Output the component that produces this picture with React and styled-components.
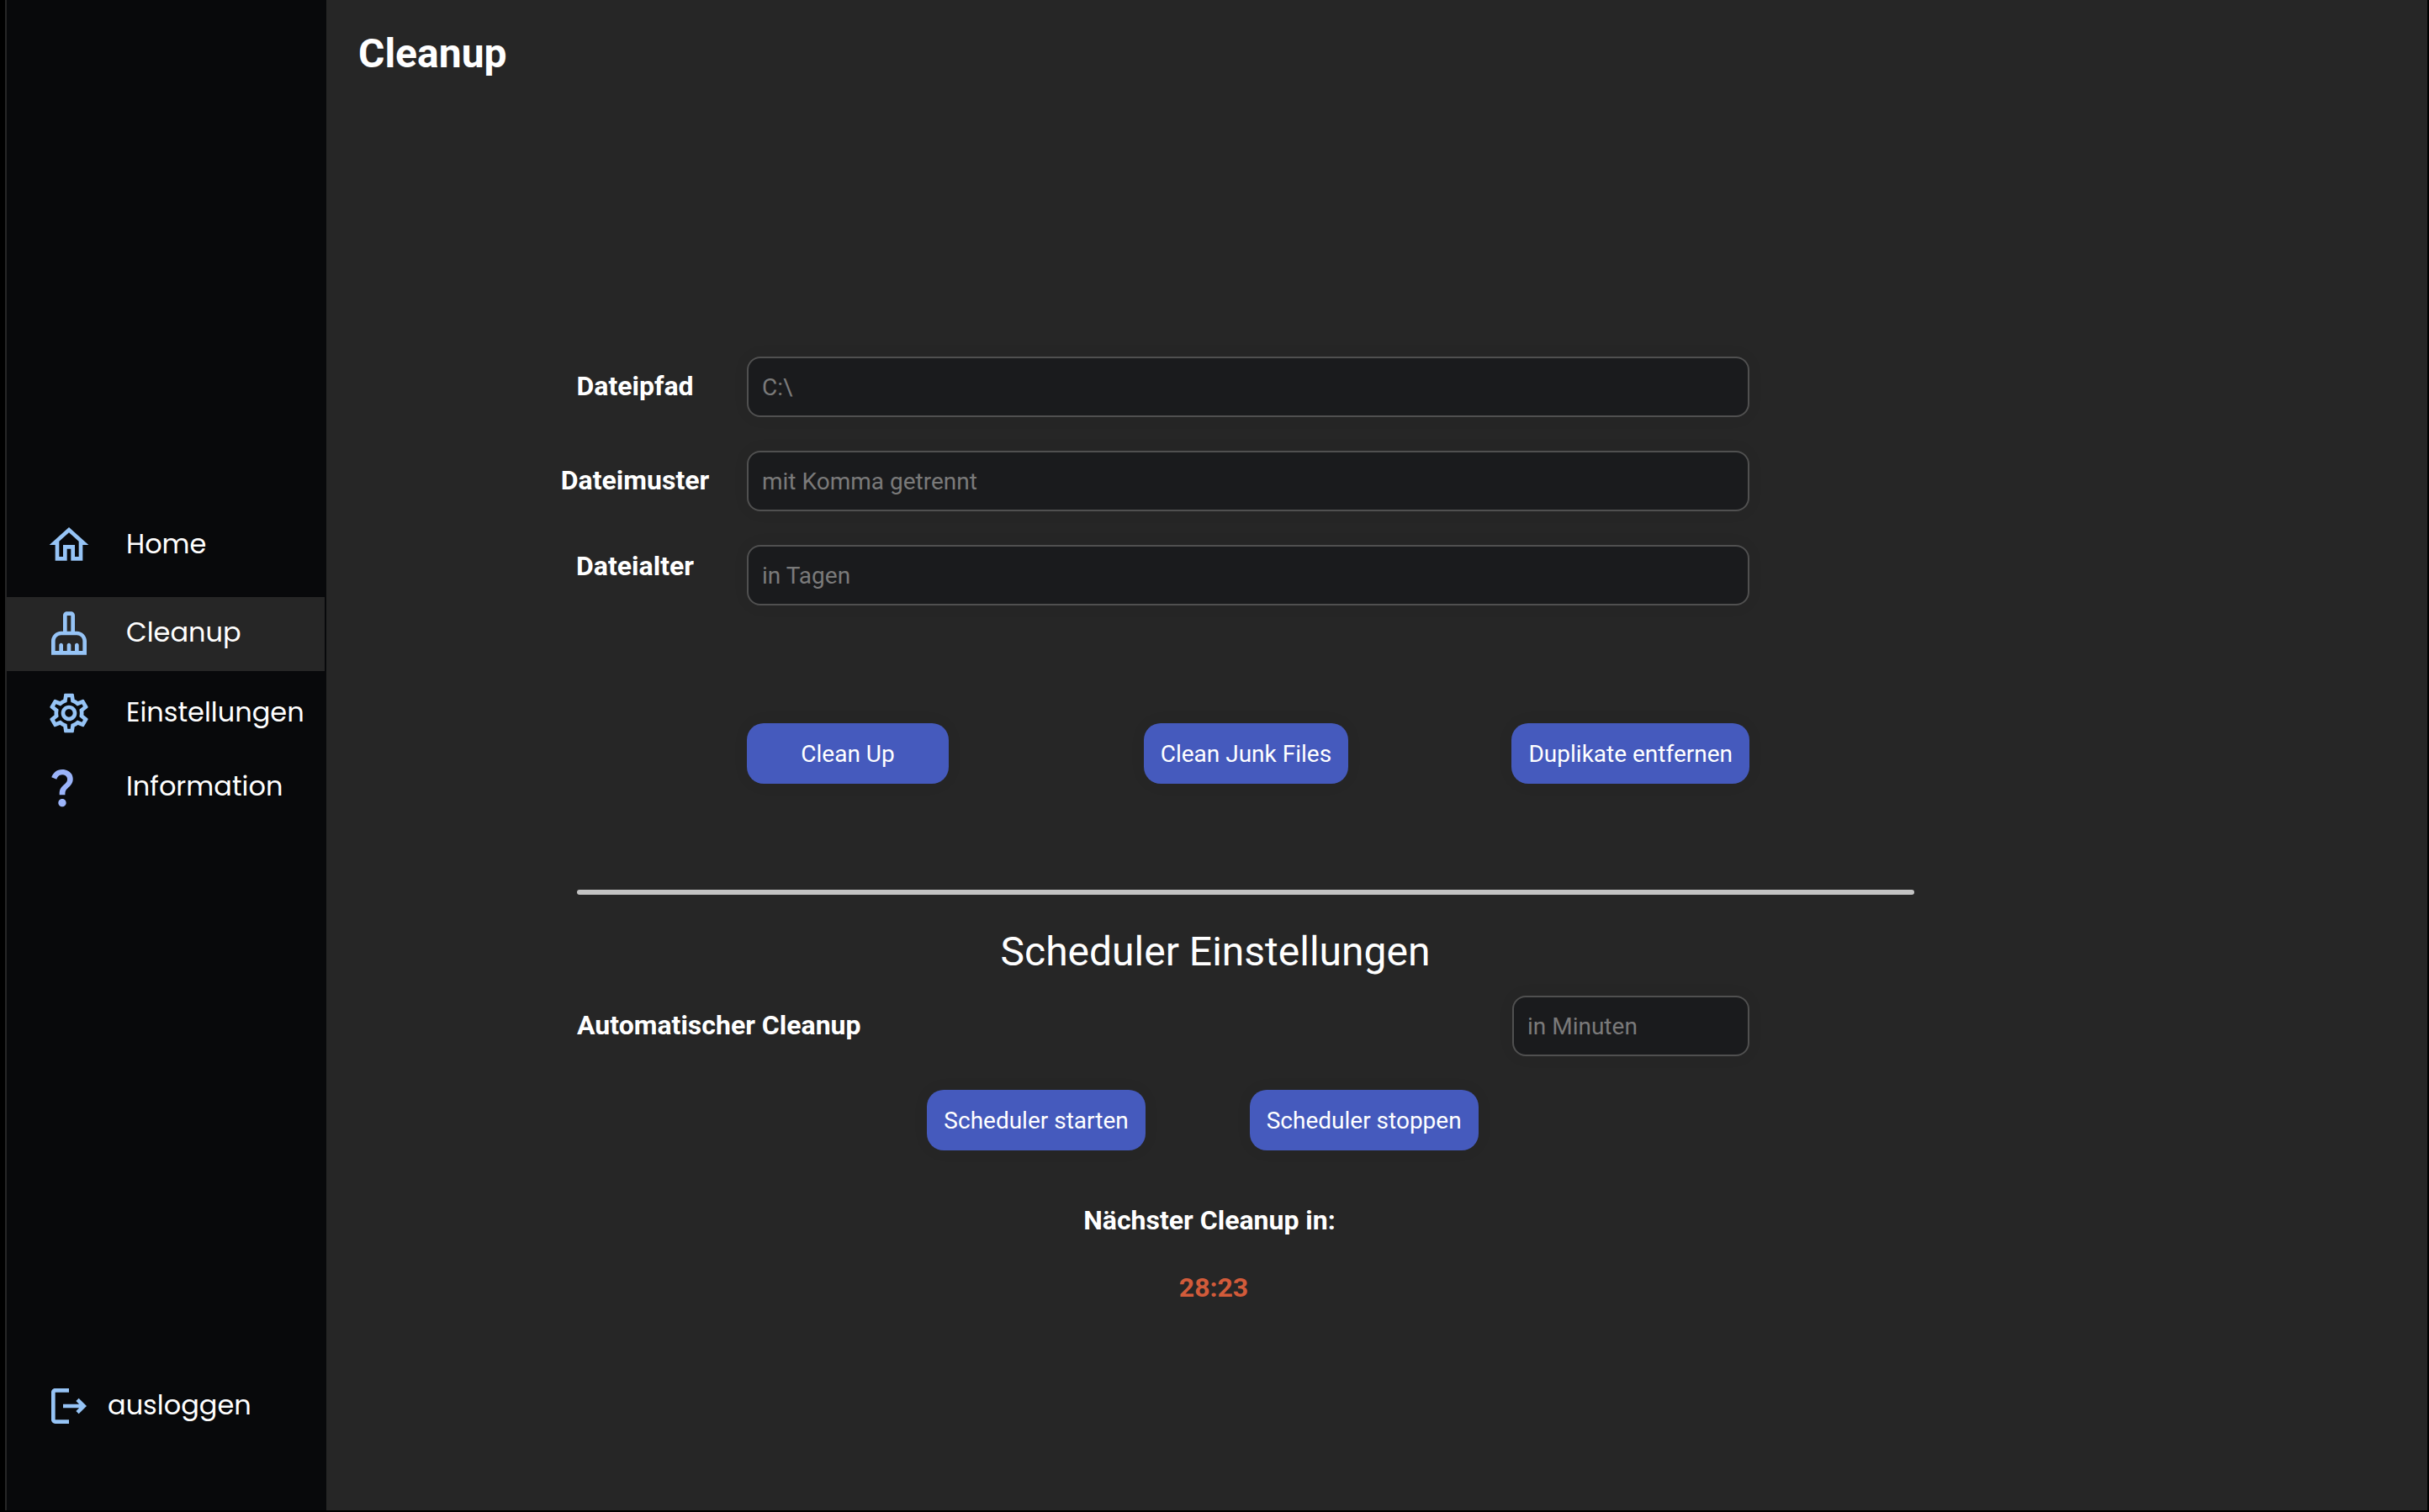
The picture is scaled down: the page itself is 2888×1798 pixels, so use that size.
import React from 'react';
import styled, { createGlobalStyle } from 'styled-components';
import {
  MdOutlineHome,
  MdOutlineCleaningServices,
  MdOutlineSettings,
  MdQuestionMark,
  MdOutlineLogout,
} from 'react-icons/md';

const GlobalStyle = createGlobalStyle`
  *, *::before, *::after { box-sizing: border-box; }
  body {
    margin: 0;
    background: #000;
    color: #fff;
    font-family: Roboto, "Liberation Sans", sans-serif;
  }
  h1, h2, p { margin: 0; }
`;

const Frame = styled.div`
  min-height: 100vh;
  display: flex;
  padding: 0 2px 2px 6px;
`;

const Sidebar = styled.aside`
  flex: 0 0 382px;
  display: flex;
  flex-direction: column;
  padding: 604px 2px 80px 0;
  border-left: 2px solid #262626;
  background: #08090b;
`;

const Nav = styled.nav`
  display: flex;
  flex-direction: column;
`;

const NavGroup = styled.div`
  margin-bottom: ${(p) => p.$gap}px;
`;

const NavItem = styled.a`
  display: grid;
  grid-template-columns: ${(p) => (p.$compact ? 74 : 96)}px 1fr;
  align-items: center;
  height: 88px;
  padding: 0 0 ${(p) => (p.$active ? 2 : 0)}px 46px;
  background: ${(p) => (p.$active ? '#262626' : 'transparent')};
  color: #fff;
  font: 400 32px/48px Poppins, Inter, sans-serif;
  text-decoration: none;

  svg {
    width: 56px;
    height: 56px;
    color: ${(p) => p.$tint || '#96c4f6'};
  }
`;

const NavText = styled.span`
  padding-bottom: 2px;
`;

const LogoutArea = styled.div`
  margin-top: auto;
`;

const Main = styled.main`
  flex: 1;
  min-width: 0;
  padding-top: 36px;
  background: #262626;
`;

const PageTitle = styled.h1`
  padding-left: 38px;
  font-size: 48px;
  line-height: 56px;
  font-weight: 700;
`;

const Columns = styled.div`
  display: grid;
  grid-template-columns: 266fr 1622fr 610fr;
  padding-top: 332px;
`;

const Content = styled.div`
  grid-column: 2;
  min-width: 0;
`;

const Fields = styled.form`
  display: grid;
  gap: 40px;
  padding-right: 196px;
`;

const Field = styled.div`
  display: grid;
  grid-template-columns: 202px 1fr;
  column-gap: 32px;
`;

const Label = styled.label`
  font-size: 32px;
  line-height: ${(p) => (p.$raised ? 50 : 70)}px;
  font-weight: 700;
  text-align: center;
`;

const TextInput = styled.input`
  width: 100%;
  height: 72px;
  padding: 0 16px;
  border: 2px solid #505050;
  border-radius: 16px;
  outline: none;
  background: #1a1b1d;
  box-shadow: 0 0 20px rgba(0, 0, 0, 0.05);
  color: #fff;
  font: 400 28px/40px Roboto, "Liberation Sans", sans-serif;

  &::placeholder {
    color: #7a7a7a;
    opacity: 1;
  }
`;

const Button = styled.button`
  height: 72px;
  min-width: 240px;
  padding: 2px 20px 0;
  border: 0;
  border-radius: 20px;
  background: #455abd;
  box-shadow: 0 0 20px rgba(0, 0, 0, 0.05);
  color: #fff;
  font: 400 28px/40px Roboto, "Liberation Sans", sans-serif;
  white-space: nowrap;
  cursor: pointer;
`;

const CleanupActions = styled.div`
  display: grid;
  grid-template-columns: 472fr 438fr auto;
  justify-items: start;
  margin-top: 140px;
  padding: 0 196px 0 234px;
`;

const Divider = styled.hr`
  height: 6px;
  margin: 126px 0 40px 32px;
  border: 0;
  border-radius: 3px;
  background: #c3c3c3;
`;

const Scheduler = styled.section`
  display: flex;
  flex-direction: column;
  align-items: center;
  padding-right: 40px;
`;

const SectionTitle = styled.h2`
  font-size: 48px;
  line-height: 56px;
  font-weight: 400;
`;

const IntervalRow = styled.div`
  display: grid;
  grid-template-columns: 1fr 282px;
  align-self: stretch;
  margin: 24px 0 40px;
  padding: 0 156px 0 32px;

  ${Label} {
    text-align: left;
  }
`;

const SchedulerActions = styled.div`
  display: flex;
  gap: 124px;
  padding-right: 30px;
`;

const CountdownGroup = styled.div`
  display: grid;
  gap: 40px;
  margin-top: 63px;
  text-align: center;
  font-size: 32px;
  line-height: 40px;
  font-weight: 700;
`;

const CountdownLabel = styled.p`
  padding-right: 14px;
`;

const Countdown = styled.p`
  padding-right: 4px;
  color: #d25b3a;
`;

const fields = [
  { id: 'path', label: 'Dateipfad', placeholder: 'C:\\' },
  { id: 'pattern', label: 'Dateimuster', placeholder: 'mit Komma getrennt' },
  { id: 'age', label: 'Dateialter', placeholder: 'in Tagen', raised: true },
];

export default function App() {
  return (
    <>
      <GlobalStyle />
      <Frame>
        <Sidebar>
          <Nav>
            <NavGroup $gap={18}>
              <NavItem href="#home">
                <MdOutlineHome />
                <NavText>Home</NavText>
              </NavItem>
            </NavGroup>
            <NavGroup $gap={6}>
              <NavItem href="#cleanup" $active aria-current="page">
                <MdOutlineCleaningServices />
                <NavText>Cleanup</NavText>
              </NavItem>
            </NavGroup>
            <NavItem href="#settings">
              <MdOutlineSettings />
              <NavText>Einstellungen</NavText>
            </NavItem>
            <NavItem href="#info" $tint="#9bb4fa">
              <MdQuestionMark viewBox="3.43 0 24 24" />
              <NavText>Information</NavText>
            </NavItem>
          </Nav>
          <LogoutArea>
            <NavItem href="#logout" $compact>
              <MdOutlineLogout />
              <NavText>ausloggen</NavText>
            </NavItem>
          </LogoutArea>
        </Sidebar>
        <Main>
          <PageTitle>Cleanup</PageTitle>
          <Columns>
            <Content>
              <Fields>
                {fields.map((f) => (
                  <Field key={f.id}>
                    <Label htmlFor={f.id} $raised={f.raised}>{f.label}</Label>
                    <TextInput id={f.id} type="text" placeholder={f.placeholder} />
                  </Field>
                ))}
              </Fields>
              <CleanupActions>
                <Button type="button">Clean Up</Button>
                <Button type="button">Clean Junk Files</Button>
                <Button type="button">Duplikate entfernen</Button>
              </CleanupActions>
              <Divider />
              <Scheduler>
                <SectionTitle>Scheduler Einstellungen</SectionTitle>
                <IntervalRow>
                  <Label htmlFor="interval">Automatischer Cleanup</Label>
                  <TextInput id="interval" type="text" placeholder="in Minuten" />
                </IntervalRow>
                <SchedulerActions>
                  <Button type="button">Scheduler starten</Button>
                  <Button type="button">Scheduler stoppen</Button>
                </SchedulerActions>
                <CountdownGroup>
                  <CountdownLabel>Nächster Cleanup in:</CountdownLabel>
                  <Countdown>28:23</Countdown>
                </CountdownGroup>
              </Scheduler>
            </Content>
          </Columns>
        </Main>
      </Frame>
    </>
  );
}
